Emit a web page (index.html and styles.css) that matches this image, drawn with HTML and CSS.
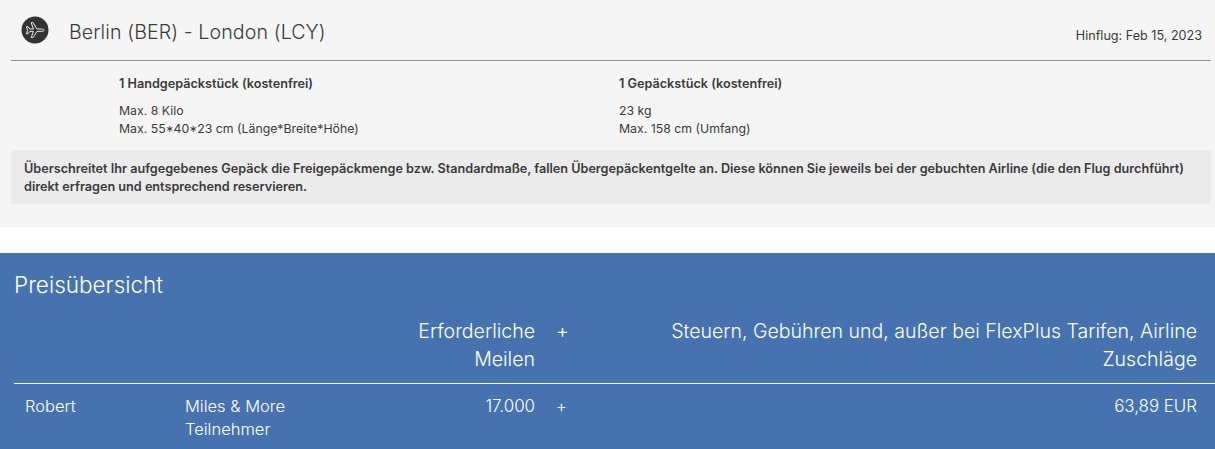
FILE: index.html
```html
<!DOCTYPE html>
<html lang="de">
<head>
<meta charset="utf-8">
<title>Preisübersicht</title>
<link rel="stylesheet" href="styles.css">
</head>
<body>
<section class="flight">
  <header class="flight-head">
    <svg class="flight-icon" width="28" height="28" viewBox="0 0 28 28" aria-hidden="true">
      <circle cx="14" cy="14" r="13.5" fill="#333"/>
      <path d="M5.5 10.6 7 10.6 8.8 13 12.4 13 10.2 6.6 12 6.6 16 13 20.4 13C22 13 23 13.6 23 14.2 23 14.9 22 15.4 20.4 15.4L16 15.4 12 21.6 10.2 21.6 12.4 15.4 8.8 15.4 7 17.8 5.5 17.8 6.6 14.2Z" fill="none" stroke="#fff" stroke-width="0.9" stroke-linejoin="round"/>
    </svg>
    <h2 class="flight-route">Berlin (BER) - London (LCY)</h2>
    <span class="flight-date">Hinflug: Feb 15, 2023</span>
  </header>
  <div class="baggage">
    <div class="baggage-item">
      <h3 class="baggage-title">1 Handgepäckstück (kostenfrei)</h3>
      <p class="baggage-text">Max. 8 Kilo<br>Max. 55*40*23 cm (Länge*Breite*Höhe)</p>
    </div>
    <div class="baggage-item">
      <h3 class="baggage-title">1 Gepäckstück (kostenfrei)</h3>
      <p class="baggage-text">23 kg<br>Max. 158 cm (Umfang)</p>
    </div>
  </div>
  <p class="notice">Überschreitet Ihr aufgegebenes Gepäck die Freigepäckmenge bzw. Standardmaße, fallen Übergepäckentgelte an. Diese können Sie jeweils bei der gebuchten Airline (die den Flug durchführt) direkt erfragen und entsprechend reservieren.</p>
</section>
<section class="price">
  <h2 class="price-title">Preisübersicht</h2>
  <div class="price-table">
    <div class="price-row price-row-head">
      <span></span>
      <span></span>
      <span class="num miles-head">Erforderliche Meilen</span>
      <span class="plus">+</span>
      <span class="num">Steuern, Gebühren und, außer bei FlexPlus Tarifen, Airline Zuschläge</span>
    </div>
    <div class="price-row price-row-body">
      <span>Robert</span>
      <span>Miles &amp; More Teilnehmer</span>
      <span class="num">17.000</span>
      <span class="plus">+</span>
      <span class="num">63,89 EUR</span>
    </div>
  </div>
</section>
</body>
</html>
```
FILE: styles.css
```css
* { box-sizing: border-box; }
html, body { margin: 0; padding: 0; }
body {
  background: #fff;
  color: #3a3a3a;
  font-family: Inter, "Liberation Sans", sans-serif;
  overflow: hidden;
  height: 449px;
}
h2, h3, p { margin: 0; font-weight: 400; }
.flight {
  background: #f5f5f5;
  border-bottom: 1px solid #ebebeb;
  height: 227px;
  padding: 0 4px 0 11px;
}
.flight-head {
  display: flex;
  align-items: center;
  height: 61px;
  border-bottom: 1px solid #8e8e8e;
  padding: 0 9px 0 10px;
}
.flight-icon { margin-top: -1px; flex: none; }
.flight-route {
  font-size: 19.6px;
  font-weight: 300;
  letter-spacing: 0.1px;
  margin-left: 20px;
  margin-top: 4px;
}
.flight-date {
  margin-left: auto;
  font-size: 12.6px;
  margin-top: 10px;
}
.baggage {
  display: grid;
  grid-template-columns: 500px 1fr;
  padding: 16px 0 0 108px;
  height: 89px;
}
.baggage-title { font-size: 12.65px; font-weight: 600; line-height: 14px; }
.baggage-text { font-size: 12.3px; line-height: 18px; margin-top: 11px; }
.notice {
  background: #ebebeb;
  height: 54px;
  padding: 10px 13px;
  font-size: 12.65px;
  font-weight: 600;
  line-height: 18px;
}
.price {
  margin-top: 26px;
  background: #4672b0;
  color: #fff;
  height: 196px;
  padding: 0 0 0 14px;
  font-weight: 300;
}
.price-title {
  font-size: 22.5px;
  font-weight: 300;
  line-height: 26px;
  padding-top: 19px;
  height: 58px;
}
.price-row {
  display: grid;
  grid-template-columns: 160px 180px 181px 54px 1fr;
  padding-right: 18px;
}
.price-row-head {
  font-size: 19.55px;
  line-height: 28px;
  height: 73px;
  padding-top: 5.5px;
  border-bottom: 1px solid #fff;
}
.price-row-body {
  font-size: 16.5px;
  line-height: 23px;
  padding-top: 11px;
}
.price-row-body > span:first-child { padding-left: 11px; }
.price-row-body > span:nth-child(2) { padding-left: 11px; padding-right: 40px; }
.price-row-body > .num { font-size: 16.9px; }
.num { text-align: right; }
.miles-head { padding-left: 40px; }
.plus { padding-left: 21px; }
```
